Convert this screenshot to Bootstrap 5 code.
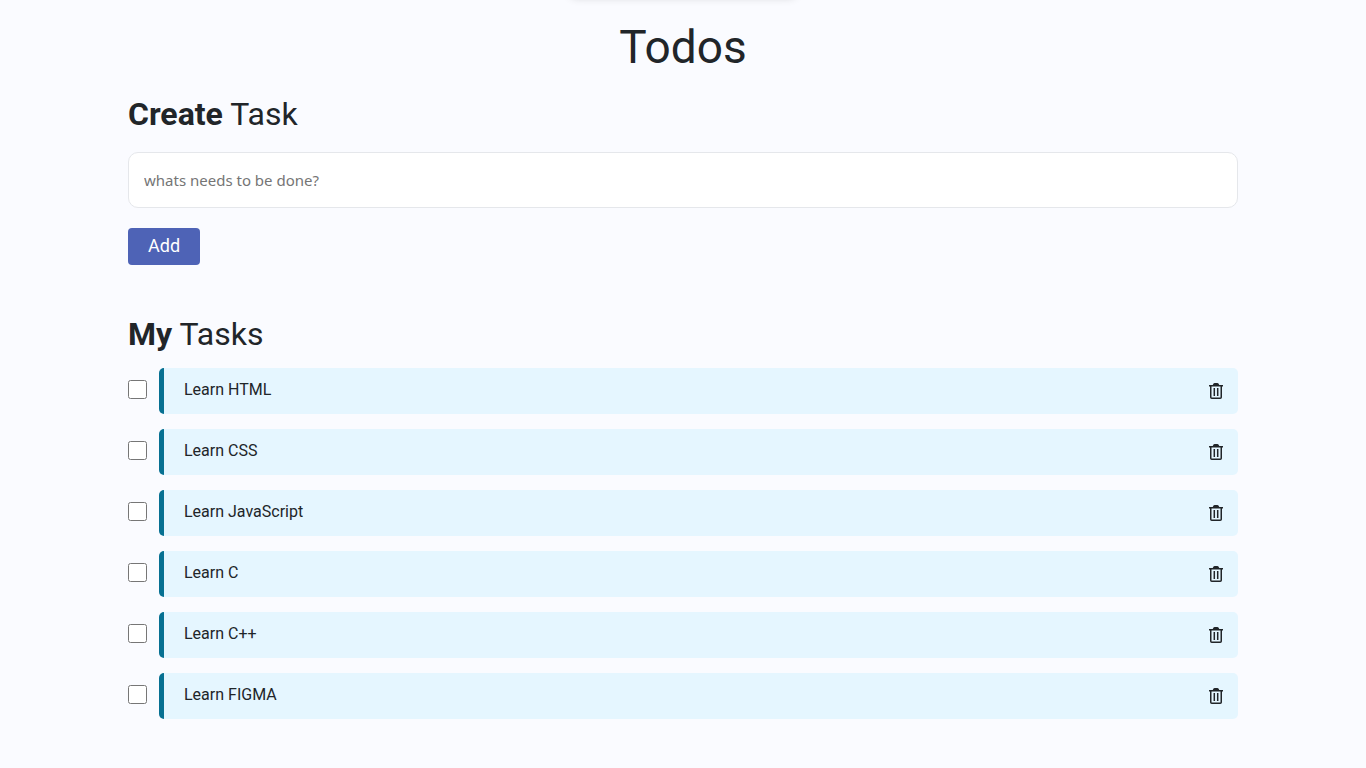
<!DOCTYPE html>
<html lang="en">
<head>
<meta charset="utf-8">
<meta name="viewport" content="width=device-width, initial-scale=1">
<title>Todos</title>
<link href="https://cdn.jsdelivr.net/npm/bootstrap@5.3.0/dist/css/bootstrap.min.css" rel="stylesheet">
<style>
  body { background: #fafbff; color: #212529; font-family: Roboto, "Liberation Sans", sans-serif; }
  .todo-app { --bs-gutter-x: 30px; }
  .app-title { font-size: 46px; line-height: 54px; }
  .section-title { font-size: 32px; line-height: 40px; margin-bottom: 14px; }
  .create-form { gap: 4px; }
  .task-field { height: 56px; padding: 0 15px; border: 1px solid #e5e7eb; border-radius: 10px; font-family: "Noto Sans", "Open Sans", sans-serif; font-size: 15px; }
  .task-field::placeholder { color: #757575; }
  .add-btn { margin-top: 16px; padding: 4px 20px 6px; border: 0; border-radius: 4px; background: #4e63b6; color: #fff; font-size: 18px; line-height: 27px; }
  .add-btn:hover { background: #40539f; color: #fff; }
  .my-tasks { margin-top: 49px; }
  .task-list { gap: 15px; }
  .task-row { gap: 12px; }
  .task-check { width: 19px; height: 19px; margin: 0 0 3px; }
  .task-item { height: 46px; padding: 0 14px 2px 20px; border-left: 5px solid #067092; border-radius: 5px; background: #e5f6ff; }
  .delete-btn { margin-top: 2px; line-height: 1; color: #212529; }
  .notice { top: -40px; width: 226px; height: 36px; border-radius: 6px; background: #fff; box-shadow: 0 1px 10px rgba(0, 0, 0, .2); }
</style>
</head>
<body>
<svg class="d-none" aria-hidden="true">
  <symbol id="trash" viewBox="0 0 16 18">
    <path fill="none" stroke="currentColor" stroke-width="1.5" d="M1 3.75h14M2.75 4v11.25q0 1 1 1h8.5q1 0 1-1V4"/>
    <path fill="currentColor" d="M4.5 3.5 5.4 1.7Q5.8 1 6.6 1h2.8q.8 0 1.2.7l.9 1.8z"/>
    <path fill="none" stroke="currentColor" stroke-width="1.5" d="M6.3 6v8M9.7 6v8"/>
  </symbol>
</svg>
<div class="notice position-absolute start-50 translate-middle-x" aria-hidden="true"></div>
<main class="container todo-app pt-3 pb-5">
  <h1 class="app-title fw-normal text-center mt-1 mb-3 pb-1">Todos</h1>
  <form class="create-form d-flex flex-column align-items-start" onsubmit="return false">
    <h2 class="section-title fw-normal"><b>Create</b> Task</h2>
    <input type="text" class="task-field w-100" placeholder="whats needs to be done?" aria-label="New task">
    <button type="submit" class="btn add-btn">Add</button>
  </form>
  <section class="my-tasks">
    <h2 class="section-title fw-normal"><b>My</b> Tasks</h2>
    <ul class="task-list list-unstyled d-flex flex-column mb-0">
      <li class="task-row d-flex align-items-center"><input type="checkbox" class="task-check flex-shrink-0" id="t1"><div class="task-item flex-grow-1 d-flex align-items-center justify-content-between"><label for="t1">Learn HTML</label><button type="button" class="delete-btn btn p-0 border-0" aria-label="Delete Learn HTML"><svg width="16" height="18"><use href="#trash"/></svg></button></div></li>
      <li class="task-row d-flex align-items-center"><input type="checkbox" class="task-check flex-shrink-0" id="t2"><div class="task-item flex-grow-1 d-flex align-items-center justify-content-between"><label for="t2">Learn CSS</label><button type="button" class="delete-btn btn p-0 border-0" aria-label="Delete Learn CSS"><svg width="16" height="18"><use href="#trash"/></svg></button></div></li>
      <li class="task-row d-flex align-items-center"><input type="checkbox" class="task-check flex-shrink-0" id="t3"><div class="task-item flex-grow-1 d-flex align-items-center justify-content-between"><label for="t3">Learn JavaScript</label><button type="button" class="delete-btn btn p-0 border-0" aria-label="Delete Learn JavaScript"><svg width="16" height="18"><use href="#trash"/></svg></button></div></li>
      <li class="task-row d-flex align-items-center"><input type="checkbox" class="task-check flex-shrink-0" id="t4"><div class="task-item flex-grow-1 d-flex align-items-center justify-content-between"><label for="t4">Learn C</label><button type="button" class="delete-btn btn p-0 border-0" aria-label="Delete Learn C"><svg width="16" height="18"><use href="#trash"/></svg></button></div></li>
      <li class="task-row d-flex align-items-center"><input type="checkbox" class="task-check flex-shrink-0" id="t5"><div class="task-item flex-grow-1 d-flex align-items-center justify-content-between"><label for="t5">Learn C++</label><button type="button" class="delete-btn btn p-0 border-0" aria-label="Delete Learn C++"><svg width="16" height="18"><use href="#trash"/></svg></button></div></li>
      <li class="task-row d-flex align-items-center"><input type="checkbox" class="task-check flex-shrink-0" id="t6"><div class="task-item flex-grow-1 d-flex align-items-center justify-content-between"><label for="t6">Learn FIGMA</label><button type="button" class="delete-btn btn p-0 border-0" aria-label="Delete Learn FIGMA"><svg width="16" height="18"><use href="#trash"/></svg></button></div></li>
    </ul>
  </section>
</main>
<script src="https://cdn.jsdelivr.net/npm/bootstrap@5.3.0/dist/js/bootstrap.bundle.min.js"></script>
</body>
</html>
